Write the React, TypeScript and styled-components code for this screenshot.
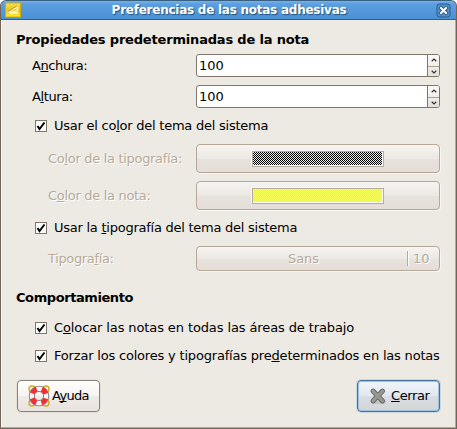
import React from 'react';
import styled, { createGlobalStyle } from 'styled-components';

const GlobalStyle = createGlobalStyle`
  * { box-sizing: border-box; }
  body { margin: 0; background: #fff; overflow: hidden; }
`;

const Window = styled.main`
  width: 457px;
  height: 429px;
  display: flex;
  flex-direction: column;
  font: 13px/16px "DejaVu Sans", sans-serif;
  color: #000;
  background: #edeae3;
  border-radius: 6px 6px 0 0;
  border: 1px solid #70655b;
  border-top: 0;
  box-shadow: inset -1px -1px #b5aa9c, inset 1px 0 #f8f6f2;
  overflow: hidden;
`;

const TitleBar = styled.header`
  flex: none;
  height: 20px;
  margin: 0 -1px;
  padding: 0 4px 0 4px;
  display: grid;
  grid-template-columns: 16px 1fr 16px;
  align-items: center;
  border: 1px solid #34648f;
  border-top-color: #38607f;
  border-bottom-color: #335e87;
  border-radius: 6px 6px 0 0;
  background: linear-gradient(#75b2ed 0, #5b9fe0 3px, #4b90d2 100%);
`;

const Title = styled.h1<{ $spacing: number }>`
  margin: 0;
  padding-left: 1px;
  text-align: center;
  font-size: 12px;
  line-height: 18px;
  letter-spacing: ${(p) => p.$spacing}px;
  white-space: nowrap;
  color: #fff;
  text-shadow: 1px 1px 1px #23507c;
`;

const Content = styled.div`
  display: flex;
  flex-direction: column;
  padding: 0 16px 0 15px;
`;

const Heading = styled.h2<{ $top: number; $spacing?: number }>`
  margin: ${(p) => p.$top}px 0 0;
  height: 16px;
  font-size: 13px;
  line-height: 16px;
  letter-spacing: ${(p) => p.$spacing ?? 0}px;
  white-space: nowrap;
`;

const FieldRow = styled.div<{ $top: number; $height: number; $indent?: number }>`
  display: grid;
  grid-template-columns: 1fr 244px;
  align-items: center;
  height: ${(p) => p.$height}px;
  margin-top: ${(p) => p.$top}px;
  padding-left: ${(p) => p.$indent ?? 16}px;
`;

const Label = styled.span<{ $disabled?: boolean; $spacing?: number }>`
  white-space: nowrap;
  letter-spacing: ${(p) => p.$spacing ?? 0}px;
  color: ${(p) => (p.$disabled ? '#b5aa9c' : '#000')};
  text-shadow: ${(p) => (p.$disabled ? '1px 1px #fff' : 'none')};
`;

const Mnemonic = styled.span`
  text-decoration: underline 1px;
  text-underline-offset: 1px;
  text-decoration-skip-ink: none;
`;

const SpinBox = styled.div`
  height: 23px;
  display: grid;
  grid-template-columns: 1fr 12px;
  border: 1px solid #80756a;
  border-radius: 3px;
  background: #fff;
  overflow: hidden;
`;

const SpinValue = styled.span`
  padding-left: 2px;
  line-height: 22px;
`;

const Stepper = styled.div`
  display: flex;
  flex-direction: column;
  border-left: 1px solid #80756a;
  background: linear-gradient(#fbfaf8, #f1eeea 50%, #e4dfd8);
`;

const Step = styled.span`
  flex: 1;
  display: flex;
  align-items: center;
  justify-content: center;
  & + & { border-top: 1px solid #ae9f91; }
`;

const CheckRow = styled.div<{ $top: number }>`
  display: flex;
  align-items: center;
  gap: 7px;
  height: 16px;
  margin-top: ${(p) => p.$top}px;
  padding-left: 19px;
`;

const Box = styled.span`
  flex: none;
  width: 12px;
  height: 12px;
  border: 1px solid #80756a;
  background: #fff;
  display: flex;
`;

const DisabledButton = styled.div<{ $height: number }>`
  height: ${(p) => p.$height}px;
  display: flex;
  align-items: center;
  justify-content: center;
  border: 1px solid #b5a898;
  border-radius: 4px;
  background: linear-gradient(#f6f4f1 0, #ece8e4 50%, #e8e2dd 51%, #e5ddd7 100%);
  box-shadow: 1px 1px #f7f5f1;
`;

const Swatch = styled.span<{ $a: string; $b: string }>`
  width: 132px;
  height: 16px;
  border: 1px solid #b5aa9c;
  box-shadow: inset -1px -1px #fff, -1px -1px #f8f6f4;
  background: repeating-conic-gradient(${(p) => p.$a} 0 25%, ${(p) => p.$b} 0 50%) 0 0 / 2px 2px;
`;

const FontName = styled.span`
  flex: 1;
  padding-left: 3px;
  text-align: center;
`;

const FontSize = styled.span`
  width: 32px;
  padding-left: 5px;
  border-left: 1px solid #b5aa9c;
  box-shadow: inset 1px 0 #fff;
  line-height: 15px;
`;

const Actions = styled.footer`
  display: flex;
  justify-content: space-between;
  margin-top: 16px;
  padding-left: 1px;
`;

const ActionButton = styled.button<{ $focus?: boolean }>`
  width: 83px;
  height: 32px;
  padding: 0 0 0 ${(p) => (p.$focus ? 11 : 10)}px;
  display: flex;
  align-items: center;
  gap: ${(p) => (p.$focus ? 4 : 2)}px;
  font: inherit;
  color: #000;
  border: 1px solid ${(p) => (p.$focus ? '#4475a2' : '#8b8075')};
  border-radius: 4px;
  background: ${(p) =>
    p.$focus
      ? 'linear-gradient(#f1f6fd 0, #e1e7ee 50%, #d9dee3 51%, #d4d6d5 100%)'
      : 'linear-gradient(#fff 0, #f6f4f1 50%, #efebe7 51%, #e8e3de 100%)'};
  box-shadow: ${(p) => (p.$focus ? 'inset 0 0 0 1px #9fbfdf, 0 0 0 1px #cbd6df' : '0 0 0 1px #e4dfd8')};
`;

const M = Mnemonic;

const NoteIcon = () => (
  <svg width="16" height="16" viewBox="0 0 16 16">
    <defs>
      <linearGradient id="note" x2="0" y2="1">
        <stop stopColor="#fbe14a" />
        <stop offset=".5" stopColor="#e9c320" />
        <stop offset="1" stopColor="#fff02c" />
      </linearGradient>
    </defs>
    <rect x=".5" y="1" width="15" height="14" fill="url(#note)" stroke="#cfac08" />
    <path d="M3 10.5 12.5 5v3.5L5 11h8" fill="none" stroke="#fffbd0" strokeWidth="1.3" />
    <path d="M3 9.5 12 4" stroke="#a98d18" strokeWidth=".8" />
  </svg>
);

const CloseIcon = () => (
  <svg width="15" height="15" viewBox="0 0 15 15">
    <rect x="1" y="1" width="13" height="13" rx="2.5" fill="#5794cc" stroke="#285985" />
    <path d="m5 5 5 5m0-5-5 5" stroke="#285985" strokeWidth="4" strokeLinecap="square" />
    <path d="m5 5 5 5m0-5-5 5" stroke="#fff" strokeWidth="2" strokeLinecap="square" />
  </svg>
);

const Tick = () => (
  <svg width="10" height="10" viewBox="0 0 10 10">
    <path d="m1.5 5 2 3L8.5 1.5" fill="none" stroke="#000" strokeWidth="2" />
  </svg>
);

const Chevron = ({ up }: { up?: boolean }) => (
  <svg width="6" height="4" viewBox="0 0 6 4">
    <path d={up ? 'M.7 3.2 3 1l2.3 2.2' : 'M.7.8 3 3 5.3.8'} fill="none" stroke="#333" strokeWidth="1.2" />
  </svg>
);

const LifebuoyIcon = () => (
  <svg width="22" height="22" viewBox="0 0 22 22">
    <g fill="none" stroke="#cfab1e" strokeWidth="1.4">
      <circle cx="4" cy="4" r="3" />
      <circle cx="18" cy="4" r="3" />
      <circle cx="4" cy="18" r="3" />
      <circle cx="18" cy="18" r="3" />
    </g>
    <circle cx="11" cy="11" r="7.2" fill="none" stroke="#7b7b7b" strokeWidth="6.2" />
    <circle cx="11" cy="11" r="7.2" fill="none" stroke="#f4f4f2" strokeWidth="4.4" />
    <circle cx="11" cy="11" r="7.2" fill="none" stroke="#ee2f38" strokeWidth="5" strokeDasharray="6.2 5.11" strokeDashoffset="-2.55" />
  </svg>
);

const CrossIcon = () => (
  <svg width="18" height="18" viewBox="0 0 20 20">
    <ellipse cx="11" cy="17" rx="8" ry="2" fill="#c3c6c8" />
    <path d="m4.5 4.5 10.5 11m0-11-10.5 11" stroke="#62635e" strokeWidth="5.6" strokeLinecap="round" />
    <path d="m4.5 4.5 10.5 11m0-11-10.5 11" stroke="#979890" strokeWidth="3.6" strokeLinecap="round" />
  </svg>
);

const Spin = () => (
  <SpinBox>
    <SpinValue>100</SpinValue>
    <Stepper>
      <Step><Chevron up /></Step>
      <Step><Chevron /></Step>
    </Stepper>
  </SpinBox>
);

const Check = ({ top, spacing, children }: { top: number; spacing?: number; children: React.ReactNode }) => (
  <CheckRow $top={top}>
    <Box><Tick /></Box>
    <Label $spacing={spacing}>{children}</Label>
  </CheckRow>
);

export default function App() {
  return (
    <>
      <GlobalStyle />
      <Window>
        <TitleBar>
          <NoteIcon />
          <Title $spacing={-0.25}>Preferencias de las notas adhesivas</Title>
          <CloseIcon />
        </TitleBar>
        <Content>
          <Heading $top={12} $spacing={-0.18}>Propiedades predeterminadas de la nota</Heading>
          <FieldRow $top={6} $height={23}>
            <Label $spacing={-0.4}>A<M>n</M>chura:</Label>
            <Spin />
          </FieldRow>
          <FieldRow $top={8} $height={23}>
            <Label $spacing={-0.4}>A<M>l</M>tura:</Label>
            <Spin />
          </FieldRow>
          <Check top={10} spacing={-0.24}>Usar el co<M>l</M>or del tema del sistema</Check>
          <FieldRow $top={10} $height={29} $indent={32}>
            <Label $disabled $spacing={-0.31}>Co<M>l</M>or de la tipografía:</Label>
            <DisabledButton $height={29}><Swatch $a="#000" $b="#eee9e4" /></DisabledButton>
          </FieldRow>
          <FieldRow $top={8} $height={29} $indent={32}>
            <Label $disabled $spacing={-0.31}>C<M>o</M>lor de la nota:</Label>
            <DisabledButton $height={29}><Swatch $a="#f2ff00" $b="#f6ff58" /></DisabledButton>
          </FieldRow>
          <Check top={10} spacing={-0.25}>Usar la <M>t</M>ipografía del tema del sistema</Check>
          <FieldRow $top={10} $height={25} $indent={32}>
            <Label $disabled $spacing={-0.36}>Tipogra<M>f</M>ía:</Label>
            <DisabledButton $height={25}>
              <FontName><Label $disabled>Sans</Label></FontName>
              <FontSize><Label $disabled>10</Label></FontSize>
            </DisabledButton>
          </FieldRow>
          <Heading $top={19} $spacing={-0.42}>Comportamiento</Heading>
          <Check top={14} spacing={-0.11}>C<M>o</M>locar las notas en todas las áreas de trabajo</Check>
          <Check top={12} spacing={-0.19}>Forzar los colores y tipografías pre<M>d</M>eterminados en las notas</Check>
          <Actions>
            <ActionButton><LifebuoyIcon /><Label $spacing={-0.65}>A<M>y</M>uda</Label></ActionButton>
            <ActionButton $focus><CrossIcon /><Label $spacing={-0.4}><M>C</M>errar</Label></ActionButton>
          </Actions>
        </Content>
      </Window>
    </>
  );
}
